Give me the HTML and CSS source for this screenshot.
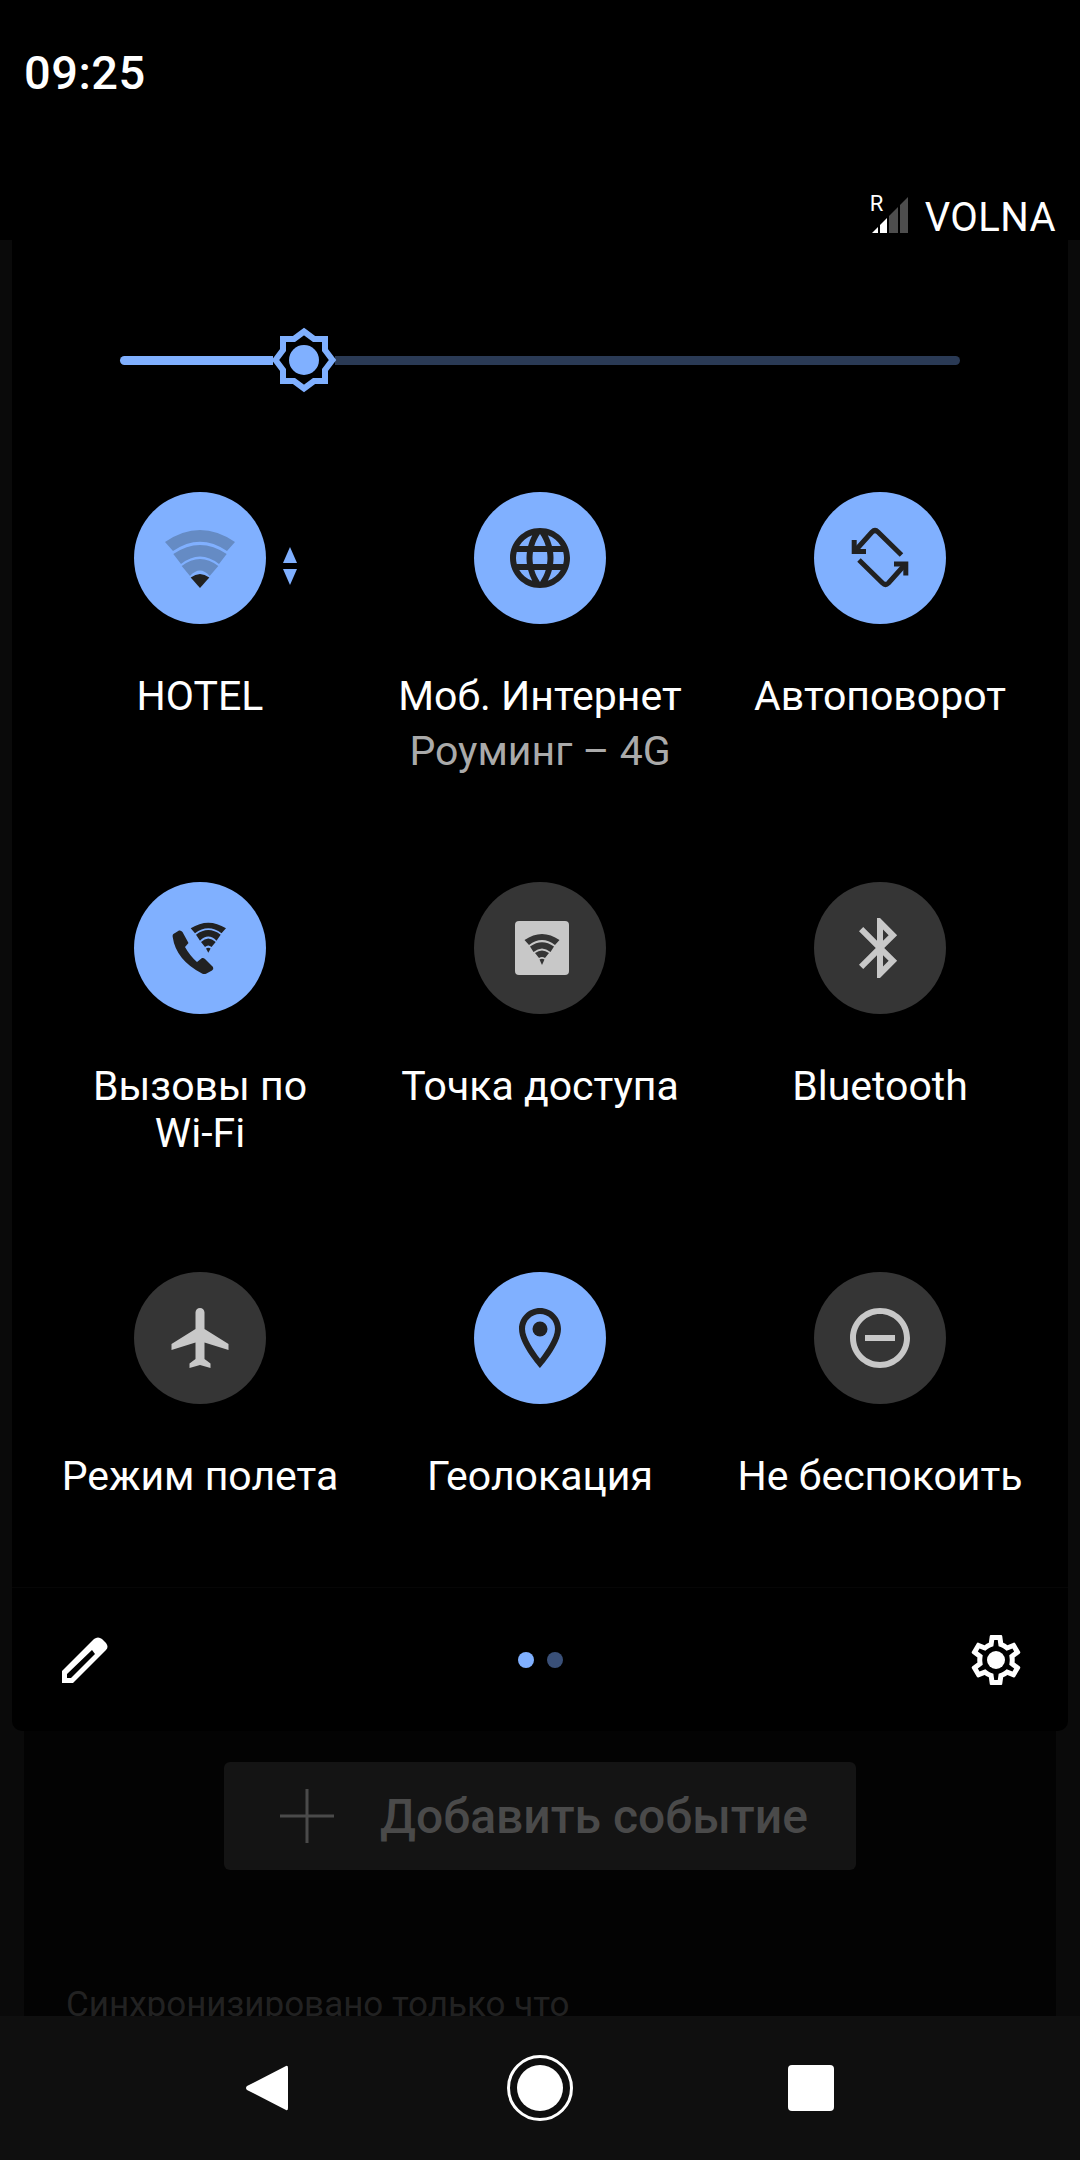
FILE: index.html
```html
<!DOCTYPE html>
<html lang="ru">
<head>
<meta charset="utf-8">
<title>Quick settings</title>
<link rel="stylesheet" href="styles.css">
</head>
<body>
<div class="screen">
  <header class="top">
    <div class="clock">09:25</div>
    <div class="carrier">
      <div class="signal-wrap">
        <svg class="signal" viewBox="0 0 40 40"><path d="M2 39 8 33V39Z" fill="#fff"/><path d="M10 39V31L17 24V39Z" fill="#fff"/><path d="M19 39V22L28 13V39Z" fill="#4d4d4d"/><path d="M30 39V11L38 3V39Z" fill="#4d4d4d"/></svg>
        <span class="roam">R</span>
      </div>
      <span>VOLNA</span>
    </div>
  </header>
  <main class="shade">
    <section class="panel">
      <div class="brightness">
        <div class="track-on"></div>
        <svg class="thumb" viewBox="0 0 66 66"><path d="M33 4.500 43 12H54V23L61.500 33 54 43V54H43L33 61.500 23 54H12V43L4.500 33 12 23V12H23Z" fill="#000" stroke="#80b0ff" stroke-width="6"/><circle cx="33" cy="33" r="15" fill="#80b0ff"/></svg>
        <div class="track-off"></div>
      </div>
      <div class="tiles">
        <div class="tile">
          <div class="tile-icon-wrap">
            <div class="disc on"><svg class="icon" viewBox="0 0 72 72"><path d="M1 20Q36-4 71 20L63 29Q36 10.400 9 29Z" fill="#658bc4"/><path d="M9.300 32Q36 14 62.700 32L55 42Q36 27 17 42Z" fill="#658bc4"/><path d="M17.700 44Q36 30 54.300 44L45.700 54Q36 43 26 54Z" fill="#658bc4"/><path d="M26.700 55.500Q36 48.500 45.300 55.500L36 66Z" fill="#212121"/></svg></div>
            <svg class="activity" viewBox="0 0 14 38"><path d="M7 0 14 16H0Z M0 22H14L7 38Z" fill="#80b0ff"/></svg>
          </div>
          <div class="label">HOTEL</div>
        </div>
        <div class="tile">
          <div class="disc on"><svg class="icon" viewBox="0 0 24 24"><path fill="#212121" d="M12 2C6.480 2 2 6.480 2 12s4.480 10 10 10 10-4.480 10-10S17.520 2 12 2zm6.930 6h-2.950c-.320-1.250-.780-2.450-1.380-3.560 1.840.630 3.370 1.910 4.330 3.560zM12 4.040c.830 1.200 1.480 2.530 1.910 3.960h-3.820c.430-1.430 1.080-2.760 1.910-3.960zM4.260 14C4.100 13.360 4 12.690 4 12s.100-1.360.260-2h3.380c-.080.660-.140 1.320-.140 2 0 .680.060 1.340.140 2H4.260zm.820 2h2.950c.320 1.250.780 2.450 1.380 3.560-1.840-.630-3.370-1.900-4.330-3.560zm2.950-8H5.080c.960-1.660 2.490-2.930 4.330-3.560C8.810 5.550 8.350 6.750 8.030 8zM12 19.960c-.830-1.200-1.480-2.530-1.910-3.960h3.820c-.430 1.430-1.080 2.760-1.910 3.960zM14.340 14H9.660c-.090-.660-.160-1.320-.160-2 0-.680.070-1.350.160-2h4.680c.090.650.160 1.320.160 2 0 .680-.070 1.340-.160 2zm.250 5.560c.600-1.110 1.060-2.310 1.380-3.560h2.950c-.960 1.650-2.490 2.930-4.330 3.560zM16.360 14c.080-.660.140-1.320.140-2 0-.680-.060-1.340-.140-2h3.380c.160.640.260 1.310.260 2s-.100 1.360-.260 2h-3.380z"/></svg></div>
          <div class="label">Моб. Интернет</div>
          <div class="sublabel">Роуминг – 4G</div>
        </div>
        <div class="tile">
          <div class="disc on"><svg class="icon" viewBox="0 0 72 72"><g fill="none" stroke="#212121" stroke-width="5"><path d="M10.200 18V29.500H22"/><path d="M10.500 29.500 28 10Q31 7 34 10L57.500 33"/><path d="M61.800 53.500V42H50"/><path d="M61.500 42 44.500 61Q41.500 64 38.500 61L15 38"/></g></svg></div>
          <div class="label">Автоповорот</div>
        </div>
        <div class="tile">
          <div class="disc on"><svg class="icon" viewBox="0 0 72 72"><g fill="#212121"><path d="M8.700 25Q8 22 11 21L15 18.500Q17 18 18.500 20L24.500 31 21 35Q26 44 33 50L38 46Q39.500 45.500 41 47L49 55Q50 57 48 58.500L42.500 61.500Q40 62.500 38 61.500 12 48 8.700 25Z"/><path d="M26.700 16.300Q44.300 5 62 16.300L57.500 21.300Q44.300 11.300 31 21.300Z"/><path d="M32 22.700Q44.300 13.500 56.700 22.700L52.500 28.700Q44.300 20.500 36 28.700Z"/><path d="M37 30Q44.300 23 51.700 30L47.500 35Q44.300 32 41 35Z"/><path d="M42 36.500Q44.300 35 46.600 36.500L44.300 40.700Z"/></g></svg></div>
          <div class="label">Вызовы по<br>Wi-Fi</div>
        </div>
        <div class="tile">
          <div class="disc off"><svg class="icon" viewBox="0 0 72 72"><rect x="11" y="9" width="54" height="54" rx="4" fill="#c8c8c8"/><g fill="#353535"><path d="M20.500 28Q38 16 55.500 28L51 33Q38 23 25 33Z"/><path d="M26 34.500Q38 26 50 34.500L46.500 40Q38 33 29.500 40Z"/><path d="M31 41Q38 36 45 41L41 46Q38 44 35 46Z"/><path d="M35.500 47.500Q38 46 40.500 47.500L38 53Z"/></g></svg></div>
          <div class="label">Точка доступа</div>
        </div>
        <div class="tile">
          <div class="disc off"><svg class="icon" viewBox="0 0 24 24"><path fill="#c8c8c8" d="M17.710 7.710 12 2h-1v7.590L6.410 5 5 6.410 10.590 12 5 17.590 6.410 19 11 14.410V22h1l5.710-5.710-4.300-4.290 4.300-4.290zM13 5.830l1.880 1.880L13 9.590V5.830zm1.880 10.460L13 18.170v-3.760l1.880 1.880z"/></svg></div>
          <div class="label">Bluetooth</div>
        </div>
        <div class="tile">
          <div class="disc off"><svg class="icon" viewBox="0 0 24 24"><path fill="#c8c8c8" d="M21 16v-2l-8-5V3.500c0-.830-.670-1.500-1.500-1.500S10 2.670 10 3.500V9l-8 5v2l8-2.500V19l-2 1.500V22l3.500-1 3.500 1v-1.500L13 19v-5.500l8 2.500z" transform="translate(.5 0)"/></svg></div>
          <div class="label">Режим полета</div>
        </div>
        <div class="tile">
          <div class="disc on"><svg class="icon" viewBox="0 0 24 24"><path fill="#212121" d="M12 2C8.130 2 5 5.130 5 9c0 5.250 7 13 7 13s7-7.750 7-13c0-3.870-3.130-7-7-7zM7 9c0-2.760 2.240-5 5-5s5 2.240 5 5c0 2.880-2.880 7.190-5 9.880C9.920 16.210 7 11.850 7 9z"/><circle cx="12" cy="9" r="2.500" fill="#212121"/></svg></div>
          <div class="label">Геолокация</div>
        </div>
        <div class="tile">
          <div class="disc off"><svg class="icon" viewBox="0 0 24 24"><path fill="#c8c8c8" d="M7 11h10v2H7zm5-9C6.480 2 2 6.480 2 12s4.480 10 10 10 10-4.480 10-10S17.520 2 12 2zm0 18c-4.410 0-8-3.590-8-8s3.590-8 8-8 8 3.590 8 8-3.590 8-8 8z"/></svg></div>
          <div class="label">Не беспокоить</div>
        </div>
      </div>
      <footer class="panel-foot">
        <svg class="edit-icon" viewBox="0 0 46 46"><path fill="#fff" fill-rule="evenodd" d="M0 34 32 2Q36-1 40 2L44 6Q47 10 44 13L11 46H0ZM5 37V41H9L33 17 30 13Z"/></svg>
        <div class="dots"><span class="dot cur"></span><span class="dot"></span></div>
        <svg class="foot-icon" viewBox="0 0 24 24"><path fill="#fff" d="M19.430 12.980c.040-.320.070-.640.070-.980s-.030-.660-.070-.980l2.110-1.650c.190-.150.240-.420.120-.640l-2-3.460c-.120-.220-.390-.300-.610-.220l-2.490 1c-.520-.400-1.080-.730-1.690-.980l-.380-2.650C14.460 2.180 14.250 2 14 2h-4c-.250 0-.460.180-.490.420l-.380 2.650c-.610.250-1.170.590-1.690.980l-2.490-1c-.230-.090-.490 0-.610.220l-2 3.460c-.130.220-.070.490.120.640l2.110 1.650c-.040.320-.070.650-.070.980s.030.660.070.980l-2.110 1.650c-.190.150-.240.420-.120.640l2 3.460c.120.220.390.300.610.220l2.490-1c.520.400 1.080.730 1.690.980l.380 2.650c.030.240.240.420.490.420h4c.250 0 .460-.180.490-.420l.380-2.650c.610-.250 1.170-.590 1.690-.980l2.490 1c.230.090.490 0 .610-.220l2-3.460c.120-.220.070-.490-.120-.640l-2.110-1.650zm-1.980-1.710c.040.310.050.520.050.730 0 .210-.020.430-.050.730l-.140 1.130.890.700 1.080.840-.700 1.210-1.270-.510-1.040-.420-.900.680c-.430.320-.840.560-1.250.730l-1.060.430-.160 1.130-.200 1.350h-1.400l-.190-1.350-.160-1.130-1.060-.430c-.430-.180-.830-.410-1.230-.710l-.910-.700-1.060.430-1.270.510-.700-1.210 1.080-.840.890-.700-.140-1.130c-.030-.310-.050-.540-.050-.740s.020-.430.050-.730l.140-1.130-.890-.700-1.080-.840.700-1.210 1.270.510 1.040.420.900-.680c.430-.320.840-.560 1.250-.730l1.060-.430.160-1.130.200-1.350h1.390l.190 1.350.160 1.130 1.060.430c.430.180.830.410 1.230.710l.910.700 1.060-.430 1.270-.510.700 1.210-1.070.850-.890.700.140 1.130z"/><circle cx="12" cy="12" r="3.600" fill="#fff"/></svg>
      </footer>
    </section>
    <section class="behind">
      <div class="add-event">
        <svg class="plus" viewBox="0 0 54 54"><path d="M0 27H54M27 0V54" stroke="#4a4a4a" stroke-width="3"/></svg>
        <span>Добавить событие</span>
      </div>
      <div class="synced">Синхронизировано только что</div>
    </section>
  </main>
  <nav class="navbar">
    <svg class="nav-back" viewBox="0 0 44 48"><path d="M41 2Q43 1 43 4V44Q43 47 41 46L2 26Q0 24 2 22Z" fill="#fff"/></svg>
    <svg class="nav-home" viewBox="0 0 66 66"><circle cx="33" cy="33" r="31.500" fill="none" stroke="#fff" stroke-width="3"/><circle cx="33" cy="33" r="23" fill="#fff"/></svg>
    <div class="nav-recent"></div>
  </nav>
</div>
</body>
</html>
```
FILE: styles.css
```css
* { box-sizing: border-box; }
html, body { margin: 0; padding: 0; background: #000; }
body { font-family: Roboto, "Noto Sans", sans-serif; color: #fff; }
.screen { width: 1080px; height: 2160px; display: flex; flex-direction: column; overflow: hidden; background: #000; }

.top { height: 240px; flex: none; display: flex; justify-content: space-between; align-items: flex-start; background: #000; }
.clock { margin: 48px 0 0 24px; font-size: 47px; line-height: 50px; font-weight: 500; letter-spacing: .5px; }
.carrier { display: flex; align-items: flex-end; gap: 15px; margin: 194px 24px 0 0; font-size: 40px; line-height: 44px; letter-spacing: .4px; }
.signal-wrap { position: relative; width: 40px; height: 40px; flex: none; margin-bottom: 6px; }
.signal { width: 40px; height: 40px; display: block; }
.roam { position: absolute; left: 0; top: 2px; font-size: 22px; line-height: 16px; letter-spacing: 0; color: #fff; }

.shade { flex: 1; min-height: 0; display: flex; flex-direction: column; background: #0a0a0a; }
.panel { height: 1491px; flex: none; margin: 0 12px; padding-top: 60px; display: flex; flex-direction: column; background: #000; border-radius: 0 0 10px 10px; }

.brightness { height: 120px; flex: none; display: flex; align-items: center; padding: 0 108px; }
.track-on { width: 153px; height: 9px; background: #80b0ff; border-radius: 5px 0 0 5px; margin-right: -2px; flex: none; }
.track-off { flex: 1; height: 9px; background: #2a3a55; border-radius: 0 5px 5px 0; margin-left: -2px; }
.thumb { width: 66px; height: 66px; flex: none; position: relative; }

.tiles { display: grid; grid-template-columns: repeat(3, 340px); grid-template-rows: 390px 390px 315px; justify-content: center; margin-top: 72px; flex: none; }
.tile { display: flex; flex-direction: column; align-items: center; text-align: center; }
.tile-icon-wrap { position: relative; width: 132px; height: 132px; }
.disc { width: 132px; height: 132px; flex: none; border-radius: 50%; display: flex; align-items: center; justify-content: center; }
.disc.on { background: #80b0ff; }
.disc.off { background: #353535; }
.icon { width: 72px; height: 72px; display: block; }
.activity { position: absolute; left: 149px; top: 55px; width: 14px; height: 38px; }
.label { margin-top: 49px; font-size: 41px; line-height: 47px; color: #fff; white-space: nowrap; }
.sublabel { margin-top: 8px; font-size: 41px; line-height: 47px; color: #aaa; white-space: nowrap; }

.panel-foot { flex: 1; display: flex; align-items: center; justify-content: space-between; padding: 0 42px; border-top: 1px solid #060606; }
.foot-icon { width: 60px; height: 60px; display: block; }
.edit-icon { width: 46px; height: 46px; display: block; margin: 0 6px 0 8px; }
.dots { display: flex; gap: 13px; }
.dot { width: 16px; height: 16px; border-radius: 50%; background: #3a5078; }
.dot.cur { background: #80b0ff; }

.behind { flex: 1; min-height: 0; margin: 0 24px; background: #030303; display: flex; flex-direction: column; align-items: center; overflow: hidden; }
.add-event { margin-top: 31px; flex: none; width: 632px; height: 108px; display: flex; align-items: center; gap: 46px; padding-left: 56px; background: #141414; border-radius: 6px; color: #4a4a4a; font-size: 48px; font-weight: 500; white-space: nowrap; }
.plus { width: 54px; height: 54px; flex: none; }
.synced { align-self: flex-start; flex: none; margin: 115px 0 0 42px; font-size: 35px; line-height: 40px; color: #222; white-space: nowrap; }

.navbar { height: 144px; flex: none; display: flex; align-items: center; justify-content: center; padding-right: 2px; background: #0f0f0f; }
.nav-back { width: 44px; height: 48px; margin-right: 218px; }
.nav-home { width: 66px; height: 66px; }
.nav-recent { width: 46px; height: 46px; margin-left: 215px; background: #fff; border-radius: 4px; }
```
